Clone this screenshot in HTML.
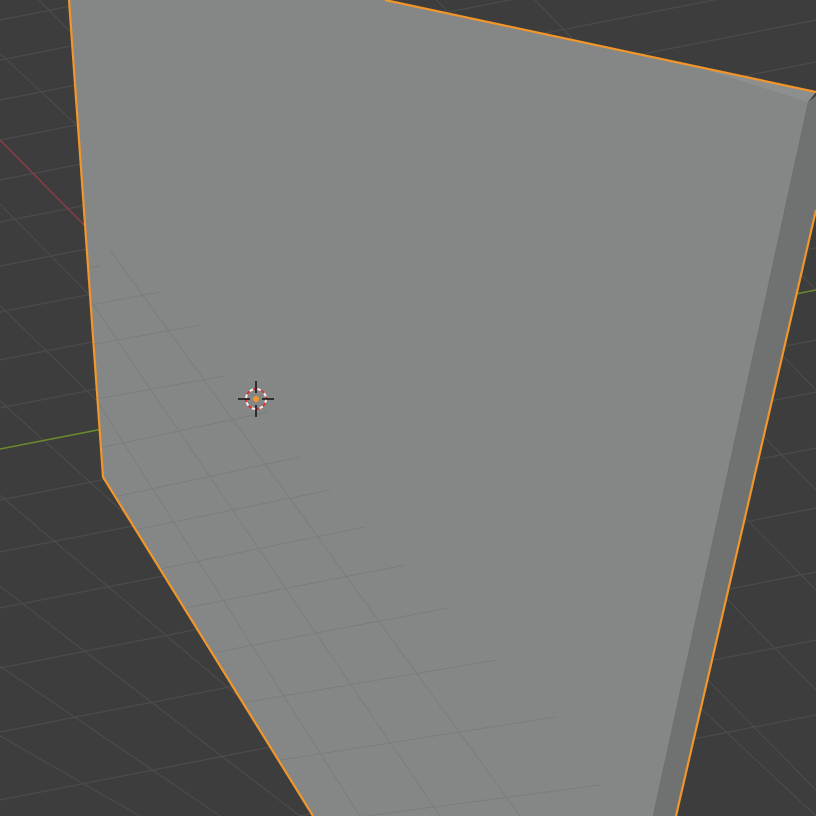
<!DOCTYPE html>
<html><head><style>html,body{margin:0;padding:0;background:#3d3d3d;overflow:hidden;width:816px;height:816px}svg{display:block}</style></head>
<body>
<svg width="816" height="816" viewBox="0 0 816 816" xmlns="http://www.w3.org/2000/svg">
<defs><clipPath id="w"><polygon points="69,0 385,0 816,92 808,102 653,816 313,816 103,477"/></clipPath></defs>
<rect width="816" height="816" fill="#3d3d3d"/>
<g stroke="#4b4b4b" stroke-width="1.2">
<line x1="0" y1="20" x2="816" y2="-140"/>
<line x1="0" y1="60" x2="816" y2="-100"/>
<line x1="0" y1="100" x2="816" y2="-60"/>
<line x1="0" y1="140" x2="816" y2="-20"/>
<line x1="0" y1="180" x2="816" y2="20"/>
<line x1="0" y1="222" x2="816" y2="62"/>
<line x1="0" y1="266" x2="816" y2="106"/>
<line x1="0" y1="312" x2="816" y2="152"/>
<line x1="0" y1="360" x2="816" y2="200"/>
<line x1="0" y1="408" x2="816" y2="248"/>
<line x1="0" y1="500" x2="816" y2="340"/>
<line x1="0" y1="552" x2="816" y2="392"/>
<line x1="0" y1="608" x2="816" y2="448"/>
<line x1="0" y1="668" x2="816" y2="508"/>
<line x1="0" y1="732" x2="816" y2="572"/>
<line x1="0" y1="800" x2="816" y2="640"/>
<line x1="300" y1="816" x2="816" y2="715"/>
<line x1="-200" y1="0" x2="600" y2="816"/>
<line x1="-250" y1="60" x2="520" y2="816"/>
<line x1="-300" y1="130" x2="460" y2="816"/>
<line x1="-350" y1="200" x2="380" y2="816"/>
<line x1="-400" y1="280" x2="300" y2="816"/>
<line x1="-450" y1="360" x2="220" y2="816"/>
<line x1="-500" y1="450" x2="140" y2="816"/>
<line x1="-100" y1="-40" x2="816" y2="816"/>
<line x1="-20" y1="-60" x2="816" y2="790"/>
<line x1="60" y1="-80" x2="816" y2="690"/>
<line x1="140" y1="-100" x2="816" y2="590"/>
<line x1="220" y1="-120" x2="816" y2="490"/>
<line x1="300" y1="-140" x2="816" y2="390"/>
<line x1="380" y1="-160" x2="816" y2="290"/>
</g>
<line x1="0" y1="140" x2="90" y2="231" stroke="#8a3c46" stroke-width="1.5"/>
<line x1="0" y1="449" x2="816" y2="290" stroke="#6a8a2e" stroke-width="1.5"/>
<polygon points="69,0 385,0 816,92 808,102 653,816 313,816 103,477" fill="#858787"/>
<polygon points="700,68 816,92 808,102" fill="#8d8e8e"/>
<polygon points="808,102 816,96 816,210 676,816 653,816" fill="#707171"/>
<g stroke="#7b7c7c" stroke-width="1" clip-path="url(#w)">
<line x1="90" y1="268" x2="100" y2="266"/>
<line x1="90" y1="305" x2="160" y2="292"/>
<line x1="90" y1="345" x2="200" y2="325"/>
<line x1="90" y1="400" x2="225" y2="376"/>
<line x1="90" y1="450" x2="268" y2="412"/>
<line x1="100" y1="500" x2="300" y2="457"/>
<line x1="110" y1="535" x2="330" y2="490"/>
<line x1="130" y1="575" x2="365" y2="527"/>
<line x1="150" y1="615" x2="405" y2="565"/>
<line x1="175" y1="660" x2="448" y2="608"/>
<line x1="200" y1="710" x2="497" y2="660"/>
<line x1="230" y1="768" x2="555" y2="717"/>
<line x1="260" y1="830" x2="600" y2="785"/>
<line x1="90" y1="390" x2="360" y2="816"/>
<line x1="90" y1="300" x2="440" y2="816"/>
<line x1="110" y1="250" x2="520" y2="816"/>
</g>
<polyline points="69,0 103,477 313,816" fill="none" stroke="#f0962a" stroke-width="2.2"/>
<polyline points="385,0 816,92" fill="none" stroke="#f0962a" stroke-width="2.2"/>
<polyline points="816,210 676,816" fill="none" stroke="#f0962a" stroke-width="2.2"/>
<g transform="translate(256,399)">
<circle r="10" fill="none" stroke="#eee" stroke-width="2" stroke-dasharray="4 4"/>
<circle r="10" fill="none" stroke="#d33" stroke-width="2" stroke-dasharray="4 4" stroke-dashoffset="4"/>
<line x1="0" y1="-18" x2="0" y2="-6" stroke="#111" stroke-width="1.5"/>
<line x1="0" y1="6" x2="0" y2="18" stroke="#111" stroke-width="1.5"/>
<line x1="-18" y1="0" x2="-6" y2="0" stroke="#111" stroke-width="1.5"/>
<line x1="6" y1="0" x2="18" y2="0" stroke="#111" stroke-width="1.5"/>
<circle r="3" fill="#f0962a"/>
</g>
</svg>
</body></html>
